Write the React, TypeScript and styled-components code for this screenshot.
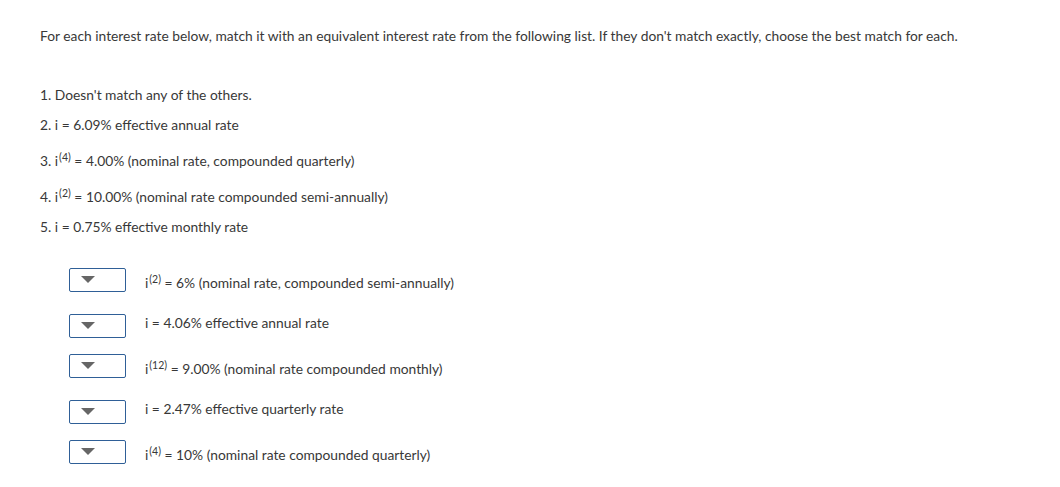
import React from "react";
import styled, { createGlobalStyle } from "styled-components";

const Global = createGlobalStyle`
  html, body { margin: 0; padding: 0; background: #fff; }
  body { font-family: "Lato", "Liberation Sans", Arial, sans-serif; color: #383838; }
`;

const Page = styled.div`
  padding: 27px 40px 0 40px;
  font-size: 13.8px;
  line-height: 18px;
`;

const Intro = styled.p`
  margin: 0 0 41px 0;
`;

const List = styled.div`
  display: flex;
  flex-direction: column;
  margin-bottom: 20px;
`;

const Item = styled.div<{ $sup?: boolean }>`
  padding-top: ${(p) => (p.$sup ? 6 : 0)}px;
  margin-bottom: 12px;
  line-height: 18px;
`;

const Sup = styled.sup`
  font-size: 10.5px;
  line-height: 0;
  vertical-align: 5px;
  margin-left: 1px;
`;

const Rows = styled.div`
  display: flex;
  flex-direction: column;
  padding-left: 29px;
`;

const Row = styled.div`
  display: grid;
  grid-template-columns: 57px auto;
  column-gap: 19px;
  align-items: start;
`;

const Select = styled.div`
  box-sizing: border-box;
  width: 57px;
  height: 24px;
  border: 1px solid #2f5f97;
  border-radius: 2px;
  background: #fff;
  display: flex;
  align-items: center;
  padding-left: 11px;
`;

const Caret = styled.span`
  width: 0;
  height: 0;
  border-left: 7px solid transparent;
  border-right: 7px solid transparent;
  border-top: 7px solid #666;
  margin-top: -2px;
`;

const RowText = styled.div<{ $sup?: boolean }>`
  padding-top: ${(p) => (p.$sup ? 6 : 0)}px;
  padding-bottom: 22px;
  line-height: 18px;
`;

type Opt = { pre?: string; sup?: string; text: string };

const options: Opt[] = [
  { pre: "i", sup: "(2)", text: " = 6% (nominal rate, compounded semi-annually)" },
  { text: "i = 4.06% effective annual rate" },
  { pre: "i", sup: "(12)", text: " = 9.00% (nominal rate compounded monthly)" },
  { text: "i = 2.47% effective quarterly rate" },
  { pre: "i", sup: "(4)", text: " = 10% (nominal rate compounded quarterly)" },
];

export default function App() {
  return (
    <>
      <Global />
      <Page>
        <Intro>
          For each interest rate below, match it with an equivalent interest rate from the following list. If they don't match exactly, choose the best match for each.
        </Intro>
        <List>
          <Item>1. Doesn't match any of the others.</Item>
          <Item>2. i = 6.09% effective annual rate</Item>
          <Item $sup>
            3. i<Sup>(4)</Sup> = 4.00% (nominal rate, compounded quarterly)
          </Item>
          <Item $sup>
            4. i<Sup>(2)</Sup> = 10.00% (nominal rate compounded semi-annually)
          </Item>
          <Item>5. i = 0.75% effective monthly rate</Item>
        </List>
        <Rows>
          {options.map((o, i) => (
            <Row key={i}>
              <Select>
                <Caret />
              </Select>
              <RowText $sup={!!o.sup}>
                {o.pre}
                {o.sup && <Sup>{o.sup}</Sup>}
                {o.text}
              </RowText>
            </Row>
          ))}
        </Rows>
      </Page>
    </>
  );
}
